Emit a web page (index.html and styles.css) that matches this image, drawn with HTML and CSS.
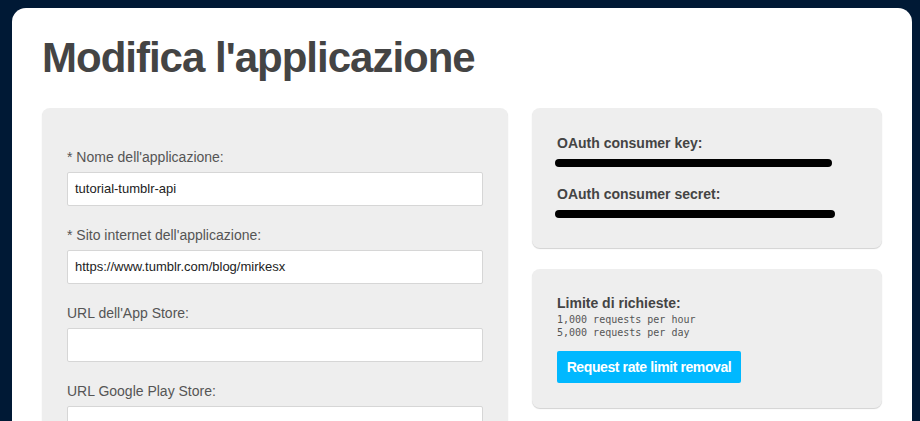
FILE: index.html
```html
<!DOCTYPE html>
<html lang="it">
<head>
<meta charset="utf-8">
<title>Modifica l'applicazione</title>
<link rel="stylesheet" href="styles.css">
</head>
<body>
<div class="card">
  <h1 class="title">Modifica l'applicazione</h1>
  <div class="columns">
    <div class="panel form-panel">
      <div class="field">
        <label class="label">* Nome dell'applicazione:</label>
        <div class="input">tutorial-tumblr-api</div>
      </div>
      <div class="field">
        <label class="label">* Sito internet dell'applicazione:</label>
        <div class="input">https://www.tumblr.com/blog/mirkesx</div>
      </div>
      <div class="field">
        <label class="label">URL dell'App Store:</label>
        <div class="input"></div>
      </div>
      <div class="field">
        <label class="label">URL Google Play Store:</label>
        <div class="input"></div>
      </div>
    </div>
    <div class="side">
      <div class="panel keys-panel">
        <div class="key-label">OAuth consumer key:</div>
        <div class="redact redact-1"></div>
        <div class="key-label key-label-2">OAuth consumer secret:</div>
        <div class="redact redact-2"></div>
      </div>
      <div class="panel limit-panel">
        <div class="limit-title">Limite di richieste:</div>
        <div class="mono">1,000 requests per hour</div>
        <div class="mono">5,000 requests per day</div>
        <button class="btn">Request rate limit removal</button>
      </div>
    </div>
  </div>
</div>
</body>
</html>
```
FILE: styles.css
```css
html, body {
  margin: 0;
  padding: 0;
}
body {
  background: #001935;
  height: 421px;
  overflow: hidden;
  font-family: "Liberation Sans", Arial, sans-serif;
}
.card {
  margin: 8px 8px 0 12px;
  background: #fff;
  border-radius: 14px 14px 0 0;
  padding: 26px 30px 40px;
  height: 500px;
}
.title {
  margin: 0 0 26px;
  font-size: 42px;
  line-height: 48px;
  letter-spacing: -1px;
  font-weight: bold;
  color: #444;
}
.columns {
  display: grid;
  grid-template-columns: 466px 350px;
  gap: 24px;
  align-items: start;
}
.panel {
  background: #eeeeee;
  border-radius: 8px;
  box-shadow: 0 1px 1px rgba(0, 0, 0, 0.18);
}
.form-panel {
  padding: 39px 25px 30px;
  height: 400px;
}
.field {
  margin-bottom: 19px;
}
.label {
  display: block;
  font-size: 14px;
  line-height: 20px;
  color: #555;
  margin-bottom: 5px;
}
.input {
  box-sizing: border-box;
  height: 34px;
  background: #fff;
  border: 1px solid #d6d6d6;
  border-radius: 2px;
  padding: 0 7px;
  font-size: 13px;
  line-height: 32px;
  color: #222;
}
.side {
  display: flex;
  flex-direction: column;
  gap: 21px;
}
.keys-panel {
  padding: 25px 25px 30px 25px;
}
.key-label {
  font-size: 14px;
  line-height: 20px;
  font-weight: bold;
  color: #444;
  margin-bottom: 6px;
}
.key-label-2 {
  margin-top: 17px;
}
.redact {
  height: 8px;
  background: #000;
  border-radius: 4px;
  margin-left: -2px;
}
.redact-1 {
  width: 277px;
}
.redact-2 {
  width: 280px;
}
.limit-panel {
  padding: 24px 25px 25px;
}
.limit-title {
  font-size: 14px;
  line-height: 20px;
  font-weight: bold;
  color: #444;
}
.mono {
  font-family: "DejaVu Sans Mono", "Liberation Mono", monospace;
  font-size: 10px;
  line-height: 13px;
  color: #555;
}
.btn {
  display: block;
  margin-top: 12px;
  height: 32px;
  width: 184px;
  padding: 0;
  border: none;
  border-radius: 2px;
  background: #00b8ff;
  color: #fff;
  font-family: "Liberation Sans", Arial, sans-serif;
  font-size: 14px;
  letter-spacing: -0.4px;
  font-weight: bold;
  cursor: pointer;
}
```
